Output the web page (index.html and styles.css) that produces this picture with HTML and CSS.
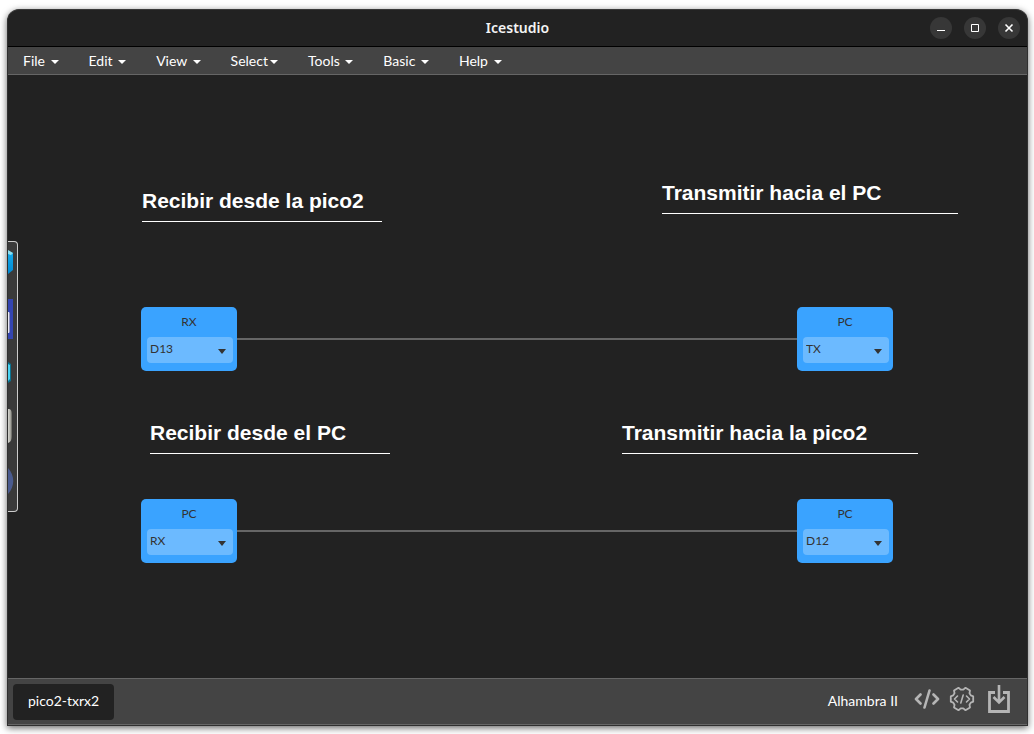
FILE: index.html
```html
<!DOCTYPE html>
<html lang="es">
<head>
<meta charset="utf-8">
<meta name="viewport" content="width=device-width, initial-scale=1">
<title>Icestudio</title>
<link rel="stylesheet" href="styles.css">
</head>
<body>
<div class="window">
  <header class="titlebar">
    <h1 class="title">Icestudio</h1>
    <div class="controls">
      <button class="control" type="button" aria-label="Minimize"><svg viewBox="0 0 22 22"><path d="M7 13.5h8"/></svg></button>
      <button class="control" type="button" aria-label="Maximize"><svg viewBox="0 0 22 22"><path d="M7.5 7.5h7v7h-7z"/></svg></button>
      <button class="control" type="button" aria-label="Close"><svg viewBox="0 0 22 22"><path class="cross" d="M7.5 7.5l7 7M14.5 7.5l-7 7"/></svg></button>
    </div>
  </header>
  <nav class="menubar">
    <button class="menu" type="button">File <span class="caret"></span></button>
    <button class="menu" type="button">Edit <span class="caret"></span></button>
    <button class="menu" type="button">View <span class="caret"></span></button>
    <button class="menu" type="button">Select<span class="caret"></span></button>
    <button class="menu" type="button">Tools <span class="caret"></span></button>
    <button class="menu" type="button">Basic <span class="caret"></span></button>
    <button class="menu" type="button">Help <span class="caret"></span></button>
  </nav>
  <main class="canvas">
    <h2 class="note note-a">Recibir desde la pico2</h2>
    <h2 class="note note-b">Transmitir hacia el PC</h2>
    <h2 class="note note-c">Recibir desde el PC</h2>
    <h2 class="note note-d">Transmitir hacia la pico2</h2>
    <div class="wire wire-top"></div>
    <div class="wire wire-bottom"></div>
    <div class="block left top">
      <label for="pin-a">RX</label>
      <div class="pick"><select id="pin-a"><option>D13</option></select><svg class="arrow" viewBox="0 0 8 5"><path d="M0 0h8L4 5z"/></svg></div>
    </div>
    <div class="block right top">
      <label for="pin-b">PC</label>
      <div class="pick"><select id="pin-b"><option>TX</option></select><svg class="arrow" viewBox="0 0 8 5"><path d="M0 0h8L4 5z"/></svg></div>
    </div>
    <div class="block left bottom">
      <label for="pin-c">PC</label>
      <div class="pick"><select id="pin-c"><option>RX</option></select><svg class="arrow" viewBox="0 0 8 5"><path d="M0 0h8L4 5z"/></svg></div>
    </div>
    <div class="block right bottom">
      <label for="pin-d">PC</label>
      <div class="pick"><select id="pin-d"><option>D12</option></select><svg class="arrow" viewBox="0 0 8 5"><path d="M0 0h8L4 5z"/></svg></div>
    </div>
    <aside class="drawer">
      <svg width="9" height="269" viewBox="0 0 9 269">
        <defs>
          <linearGradient id="metal"><stop offset="0" stop-color="#d8d8d2"/><stop offset=".6" stop-color="#a9a9a2"/><stop offset="1" stop-color="#5d5d58"/></linearGradient>
          <linearGradient id="ice" x2="0" y2="1"><stop offset="0" stop-color="#16abe9"/><stop offset="1" stop-color="#0089d4"/></linearGradient>
        </defs>
        <path fill="url(#ice)" d="M0 9l5 2v17l-5 4z"/>
        <path fill="#8be0f2" d="M0 8l5 3-2 2-3-1z"/>
        <path fill="#3445b0" d="M0 57h5v40H0z"/>
        <path fill="#e9e9f4" d="M0 70h1l1 2v17l-1 2H0z"/>
        <path fill="#8d91bd" d="M1 71h1v19H1z"/>
        <path fill="#0a7391" d="M0 120l3 2v17l-3 2z"/>
        <path fill="#49d4f4" d="M0 122l2 1v14l-2 2z"/>
        <path fill="url(#metal)" d="M0 167c3 0 4 2 4 5v22c0 3-1 6-4 7z"/>
        <path fill="#4a5b8f" d="M0 226c7 8 7 18 0 26z"/>
      </svg>
    </aside>
  </main>
  <footer class="footer">
    <button class="tab" type="button">pico2-txrx2</button>
    <div class="tools">
      <span class="board">Alhambra II</span>
      <button class="tool code" type="button" aria-label="Verify">
        <svg width="26" height="20" viewBox="0 0 26 20"><path d="M6.500 5.500L2 10l4.500 4.500M19.500 5.500L24 10l-4.500 4.500M15.500 1.500l-5 17" stroke-width="2.600"/></svg>
      </button>
      <button class="tool gear" type="button" aria-label="Build">
        <svg width="26" height="26" viewBox="0 0 26 26"><path d="M24.200 10.300v5.400L21.800 16.600 20.500 18.800 21 21.500 16.500 24.200 14.300 22.400h-2.600L9.500 24.200 5 21.500 5.500 18.800 4.200 16.600 1.800 15.700v-5.400L4.200 9.400 5.500 7.200 5 4.500 9.500 1.800 11.700 3.600h2.600L16.500 1.800 21 4.500 20.500 7.200 21.800 9.400z" stroke-width="1.800"/><path d="M8.500 10l-3 3 3 3M17.500 10l3 3-3 3M14.200 9l-2.400 8" stroke-width="1.600"/></svg>
      </button>
      <button class="tool load" type="button" aria-label="Upload">
        <svg width="22" height="28" viewBox="0 0 22 28"><path d="M7 7.500H1.500v19h19v-19H15" stroke-width="2.800" stroke-linecap="butt" stroke-linejoin="miter"/><path d="M11 0v17M5.500 12l5.500 5.500 5.500-5.500" stroke-width="2.600" stroke-linecap="butt" stroke-linejoin="miter"/></svg>
      </button>
    </div>
  </footer>
</div>
</body>
</html>
```

FILE: styles.css
```css
* { box-sizing: border-box; }

body {
  margin: 0;
  min-height: 100vh;
  padding: 9px 6px 8px 7px;
  display: flex;
  background: #fff;
  font-family: Lato, "Open Sans", sans-serif;
  font-size: 14px;
  color: #fff;
}

button {
  margin: 0;
  padding: 0;
  border: 0;
  background: none;
  color: inherit;
  font: inherit;
}

.window {
  flex: 1;
  display: flex;
  flex-direction: column;
  overflow: hidden;
  border: 1px solid #303030;
  border-top-color: #3a3a3a;
  border-radius: 12px 12px 0 0;
  background: #222;
  box-shadow: 0 2px 7px rgba(0, 0, 0, 0.6);
}

.titlebar {
  display: grid;
  grid-template-columns: 1fr auto 1fr;
  align-items: center;
  height: 37px;
  border-bottom: 1px solid #000;
}

.title {
  grid-column: 2;
  margin: 0;
  font: 600 14px/20px "Noto Sans", sans-serif;
  color: #f4f4f4;
}

.controls {
  display: flex;
  justify-content: flex-end;
  gap: 12px;
  padding-right: 7px;
}

.control {
  width: 22px;
  height: 22px;
  border-radius: 50%;
  background: #373737;
}

.control svg {
  display: block;
  fill: none;
  stroke: #fff;
}

.control .cross { stroke-width: 1.6; }

.menubar {
  display: flex;
  height: 28px;
  background: #444;
  border-bottom: 1px solid #666;
}

.menu {
  padding: 0 15px;
  white-space: nowrap;
}

.caret {
  display: inline-block;
  vertical-align: middle;
  margin-left: 2px;
  border: 4px solid transparent;
  border-top-color: #fff;
  border-bottom: 0;
}

.canvas {
  position: relative;
  flex: 1;
  min-height: 500px;
  overflow: hidden;
}

.note {
  position: absolute;
  margin: 0;
  padding-bottom: 8px;
  border-bottom: 1px solid #fff;
  font: 700 21px/24px "Liberation Sans", Arial, sans-serif;
  white-space: nowrap;
}

.note-a { left: 134px; top: 114px; width: 240px; }
.note-b { left: 654px; top: 106px; width: 296px; }
.note-c { left: 142px; top: 346px; width: 240px; }
.note-d { left: 614px; top: 346px; width: 296px; }

.wire {
  position: absolute;
  left: 229px;
  width: 560px;
  height: 2px;
  background: #666;
}

.wire-top { top: 263px; }
.wire-bottom { top: 455px; }

.block {
  position: absolute;
  display: flex;
  flex-direction: column;
  width: 96px;
  height: 64px;
  padding: 0 4px 8px 6px;
  border-radius: 5px;
  background: #3aa3ff;
  color: #333;
  font-size: 12px;
}

.block.left { left: 133px; }
.block.right { left: 789px; }
.block.top { top: 232px; }
.block.bottom { top: 424px; }

.block label {
  padding-right: 2px;
  line-height: 30px;
  text-align: center;
}

.pick {
  position: relative;
  height: 26px;
}

.pick select {
  appearance: none;
  width: 100%;
  height: 26px;
  padding: 0 20px 4px 3px;
  border: 0;
  border-radius: 4px;
  background: #6cbaff;
  color: #333;
  font: inherit;
}

.arrow {
  position: absolute;
  right: 7px;
  top: 12px;
  width: 8px;
  height: 5px;
  fill: #333;
  pointer-events: none;
}

.drawer {
  position: absolute;
  left: 0;
  top: 166px;
  width: 10px;
  height: 271px;
  border: 1px solid #ccc;
  border-left: 0;
  border-radius: 0 4px 4px 0;
  background: #3a3a3a;
  overflow: hidden;
}

.drawer svg { display: block; }

.footer {
  display: flex;
  align-items: center;
  justify-content: space-between;
  height: 47px;
  padding: 0 17px 0 5px;
  border-top: 1px solid #666;
  border-bottom: 1px solid #666;
  background: #444;
}

.tab {
  height: 36px;
  padding: 0 15px 2px;
  border-radius: 4px;
  background: #222;
}

.tools {
  display: flex;
  align-items: center;
  padding-bottom: 2px;
}

.tool {
  display: flex;
}

.tool svg {
  fill: none;
  stroke: #b5b5b5;
  stroke-linecap: round;
  stroke-linejoin: round;
}

.board { padding-right: 16px; }
.code { padding: 0 9px 4px 0; }
.gear { padding: 0 13px 4px 0; }
.load { padding-bottom: 4px; }
```
